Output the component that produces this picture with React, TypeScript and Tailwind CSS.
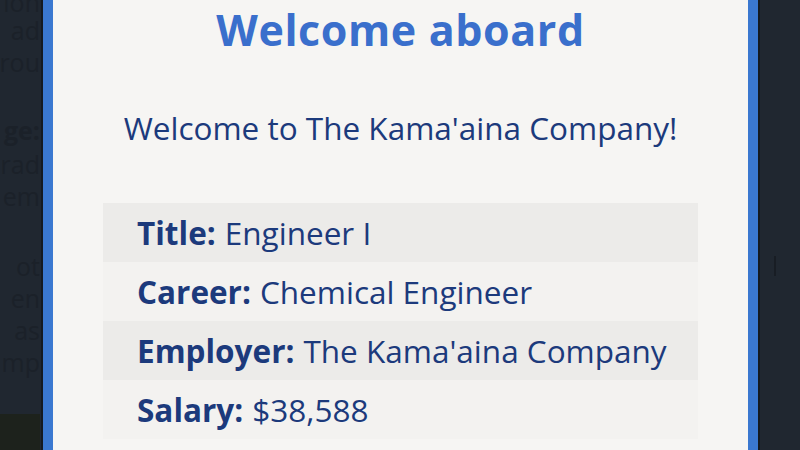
import React from 'react';

const rows = [
  { label: 'Title:', value: 'Engineer I' },
  { label: 'Career:', value: 'Chemical Engineer' },
  { label: 'Employer:', value: "The Kama'aina Company" },
  { label: 'Salary:', value: '$38,588' },
];

const ghostLines = [
  { top: 'top-[-10px]', text: 'ion' },
  { top: 'top-[18px]', text: 'ad' },
  { top: 'top-[50px]', text: 'rou' },
  { top: 'top-[118px]', text: 'ge:', bold: true },
  { top: 'top-[152px]', text: 'rad' },
  { top: 'top-[184px]', text: 'em' },
  { top: 'top-[254px]', text: 'ot' },
  { top: 'top-[286px]', text: 'en' },
  { top: 'top-[318px]', text: 'as' },
  { top: 'top-[350px]', text: 'mp' },
];

export default function App() {
  return (
    <div
      className="relative w-[800px] h-[450px] overflow-hidden bg-[#202730]"
      style={{ fontFamily: '"Open Sans", "Noto Sans", sans-serif' }}
    >
      {/* page behind the dimmed backdrop */}
      <div className="absolute left-0 top-0 w-[40px] h-[450px] overflow-hidden text-[25px] leading-[24px] text-[#1b2129]">
        {ghostLines.map((l) => (
          <div
            key={l.top}
            className={`absolute right-0 ${l.top} whitespace-nowrap ${l.bold ? 'font-bold' : ''}`}
          >
            {l.text}
          </div>
        ))}
        <div className="absolute left-0 top-[414px] w-[40px] h-[40px] bg-[#1d221c]" />
      </div>
      <div className="absolute left-[774px] top-[256px] w-[2px] h-[20px] bg-[#181d24]" />

      {/* modal */}
      <div className="absolute left-[41px] top-[-20px] w-[719px] h-[500px] border-l-2 border-r-2 border-[#141a20]">
        <div className="h-full border-x-[10px] border-[#3a78d0] bg-[#f6f5f3] flex flex-col items-center pt-[20px]">
          <h1 className="text-[43px] leading-[60px] font-bold text-[#3a6fcc] tracking-[0.6px]">Welcome aboard</h1>
          <p className="mt-[48px] text-[31.5px] leading-[40px] text-[#1c3a7c]">Welcome to The Kama'aina Company!</p>
          <div className="mt-[55px] w-[595px] flex flex-col">
            {rows.map((r, i) => (
              <div
                key={r.label}
                className={`h-[59px] flex items-center pl-[34px] text-[31.5px] text-[#1c3a7c] ${i % 2 === 0 ? 'bg-[#ecebe9]' : 'bg-[#f3f2f0]'}`}
              >
                <span className="font-bold mr-[9px]">{r.label}</span>
                <span>{r.value}</span>
              </div>
            ))}
          </div>
        </div>
      </div>
    </div>
  );
}
